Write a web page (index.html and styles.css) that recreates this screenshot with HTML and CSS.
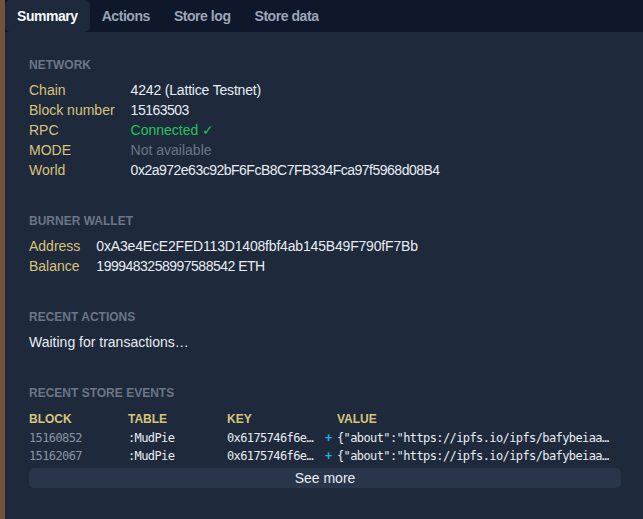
FILE: index.html
```html
<!DOCTYPE html>
<html lang="en">
<head>
<meta charset="utf-8">
<title>MUD Dev Tools</title>
<link rel="stylesheet" href="styles.css">
</head>
<body>
<div class="app">
  <div class="edge"></div>
  <div class="panel">
    <nav class="tabs">
      <span class="tab active">Summary</span>
      <span class="tab">Actions</span>
      <span class="tab">Store log</span>
      <span class="tab">Store data</span>
    </nav>
    <main class="content">
      <section class="section">
        <h2 class="heading">Network</h2>
        <dl class="pairs">
          <dt>Chain</dt><dd class="num-s">4242 (Lattice Testnet)</dd>
          <dt>Block number</dt><dd class="num">15163503</dd>
          <dt>RPC</dt><dd class="ok">Connected ✓</dd>
          <dt>MODE</dt><dd class="muted">Not available</dd>
          <dt>World</dt><dd class="num">0x2a972e63c92bF6FcB8C7FB334Fca97f5968d08B4</dd>
        </dl>
      </section>
      <section class="section">
        <h2 class="heading">Burner wallet</h2>
        <dl class="pairs">
          <dt>Address</dt><dd class="num-s">0xA3e4EcE2FED113D1408fbf4ab145B49F790fF7Bb</dd>
          <dt>Balance</dt><dd class="num">1999483258997588542 ETH</dd>
        </dl>
      </section>
      <section class="section">
        <h2 class="heading">Recent actions</h2>
        <p class="text">Waiting for transactions…</p>
      </section>
      <section class="section">
        <h2 class="heading">Recent store events</h2>
        <div class="events">
          <div class="ev-head">Block</div>
          <div class="ev-head">Table</div>
          <div class="ev-head">Key</div>
          <div class="ev-head"></div>
          <div class="ev-head">Value</div>

          <div class="mono block">15160852</div>
          <div class="mono">:MudPie</div>
          <div class="mono">0x6175746f6e…</div>
          <div class="mono plus">+</div>
          <div class="mono">{"about":"https://ipfs.io/ipfs/bafybeiaa…</div>

          <div class="mono block">15162067</div>
          <div class="mono">:MudPie</div>
          <div class="mono">0x6175746f6e…</div>
          <div class="mono plus">+</div>
          <div class="mono">{"about":"https://ipfs.io/ipfs/bafybeiaa…</div>
        </div>
        <button class="more">See more</button>
      </section>
    </main>
  </div>
</div>
</body>
</html>
```

FILE: styles.css
```css
* { box-sizing: border-box; }
html, body { margin: 0; height: 100%; }
body {
  font-family: "Liberation Sans", Arial, sans-serif;
  font-size: 14px;
  background: #1e293b;
  color: #e8edf3;
}
.app { display: flex; height: 100vh; }
.edge { width: 5px; flex: none; background: #725539; }
.panel { flex: 1; display: flex; flex-direction: column; background: #1e293b; min-width: 0; }
.tabs {
  display: flex;
  height: 32px;
  background: #0f172a;
  flex: none;
}
.tab {
  display: flex;
  align-items: center;
  padding: 0 12px;
  font-weight: 700;
  letter-spacing: -0.45px;
  color: #9aa6b8;
  border-radius: 5px;
}
.tab.active { background: #1e293b; color: #f8fafc; }
.content { padding: 24px 22px 0 24px; }
.section + .section { margin-top: 32px; }
.heading {
  margin: 0 0 6px;
  font-size: 12px;
  line-height: 18px;
  font-weight: 700;
  text-transform: uppercase;
  color: #6b7688;
}
.pairs {
  margin: 0;
  display: grid;
  grid-template-columns: auto 1fr;
  column-gap: 16px;
  line-height: 20px;
}
.pairs dt { color: #d8c47a; }
.pairs dd { margin: 0; color: #e8edf3; }
.pairs dd.num { letter-spacing: -0.5px; }
.pairs dd.num-s { letter-spacing: -0.18px; }
.pairs dd.ok { color: #22c55e; }
.pairs dd.muted { color: #6b7688; }
.text { margin: 0; line-height: 20px; }
.events {
  display: grid;
  grid-template-columns: 99px 99px 98px 12px 1fr;
}
.ev-head {
  font-size: 12px;
  font-weight: 700;
  text-transform: uppercase;
  color: #d8c47a;
  line-height: 16px;
  padding: 3px 0 2px;
}
.mono {
  font-family: "DejaVu Sans Mono", "Liberation Mono", monospace;
  font-size: 12px;
  letter-spacing: -0.6px;
  line-height: 18px;
  white-space: nowrap;
  color: #e8edf3;
}
.mono.block { color: #8a94a5; }
.mono.plus { color: #1fb0e0; font-weight: 700; }
.more {
  display: block;
  width: 100%;
  margin-top: 3px;
  height: 20px;
  padding: 0;
  border: 0;
  border-radius: 5px;
  background: #29354a;
  color: #e8edf3;
  font: 14px/20px "Liberation Sans", Arial, sans-serif;
}
```
